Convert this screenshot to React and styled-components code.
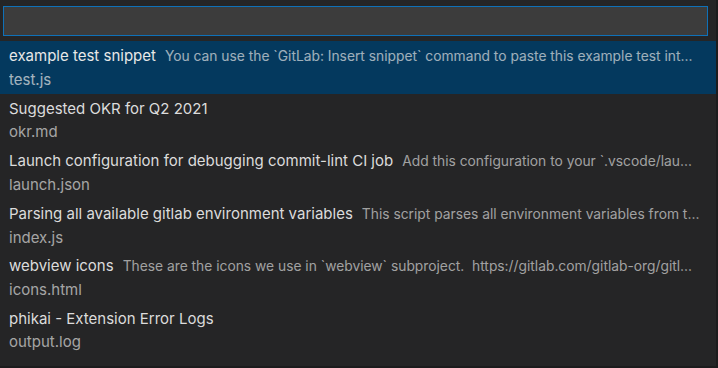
import styled, { createGlobalStyle } from "styled-components";

const GlobalStyle = createGlobalStyle`
  html, body {
    margin: 0;
    padding: 0;
    background: #1c1c1d;
  }
  body {
    font-family: Inter, "Open Sans", sans-serif;
    -webkit-font-smoothing: antialiased;
  }
`;

// descriptions are shown already trimmed, as the quick pick shows them
const items = [
  {
    label: "example test snippet",
    description:
      "You can use the `GitLab: Insert snippet` command to paste this example test int…",
    detail: "test.js",
  },
  { label: "Suggested OKR for Q2 2021", detail: "okr.md" },
  {
    label: "Launch configuration for debugging commit-lint CI job",
    description: "Add this configuration to your `.vscode/lau…",
    detail: "launch.json",
  },
  {
    label: "Parsing all available gitlab environment variables",
    description: "This script parses all environment variables from t…",
    detail: "index.js",
  },
  {
    label: "webview icons",
    description:
      "These are the icons we use in `webview` subproject.  https://gitlab.com/gitlab-org/gitl…",
    detail: "icons.html",
  },
  { label: "phikai - Extension Error Logs", detail: "output.log" },
];

function App() {
  return (
    <>
      <GlobalStyle />
      <Panel>
        <SearchBox>
          <input type="text" aria-label="Search snippets" />
        </SearchBox>
        <List>
          {items.map((item, i) => (
            <Row key={item.detail} selected={i === 0}>
              <LabelLine>
                <Label>{item.label}</Label>
                {item.description && <Description>{item.description}</Description>}
              </LabelLine>
              <Detail>{item.detail}</Detail>
            </Row>
          ))}
        </List>
      </Panel>
    </>
  );
}

const Panel = styled.div`
  width: 716px;
  height: 366px;
  background: #252526;
  padding-top: 6px;
  box-sizing: border-box;
  overflow: hidden;
`;

const SearchBox = styled.div`
  margin: 0 8px 0 3px;
  height: 30px;
  box-sizing: border-box;
  border: 1px solid #0f71b8;
  background: #3c3c3c;

  input {
    width: 100%;
    height: 100%;
    box-sizing: border-box;
    border: none;
    outline: none;
    background: transparent;
    color: #cccccc;
    font: inherit;
    font-size: 14px;
    padding: 0 6px;
  }
`;

const List = styled.div`
  margin-top: 5px;
  display: flex;
  flex-direction: column;
`;

const Row = styled.div`
  height: 52.6px;
  box-sizing: border-box;
  padding: 3px 10px 3px 9px;
  display: flex;
  flex-direction: column;
  justify-content: center;
  background: ${(p) => (p.selected ? "#04395e" : "transparent")};
  color: ${(p) => (p.selected ? "#e8e8e8" : "#dcdcdc")};
`;

const LabelLine = styled.div`
  display: flex;
  align-items: baseline;
  gap: 9px;
  line-height: 23px;
  white-space: nowrap;
  min-width: 0;
`;

const Label = styled.span`
  font-size: 15px;
  flex-shrink: 0;
`;

const Description = styled.span`
  font-size: 13.8px;
  opacity: 0.68;
  white-space: pre;
  overflow: hidden;
  text-overflow: ellipsis;
  min-width: 0;
`;

const Detail = styled.div`
  font-size: 15px;
  line-height: 23px;
  opacity: 0.7;
  white-space: nowrap;
  overflow: hidden;
  text-overflow: ellipsis;
`;

export default App;
